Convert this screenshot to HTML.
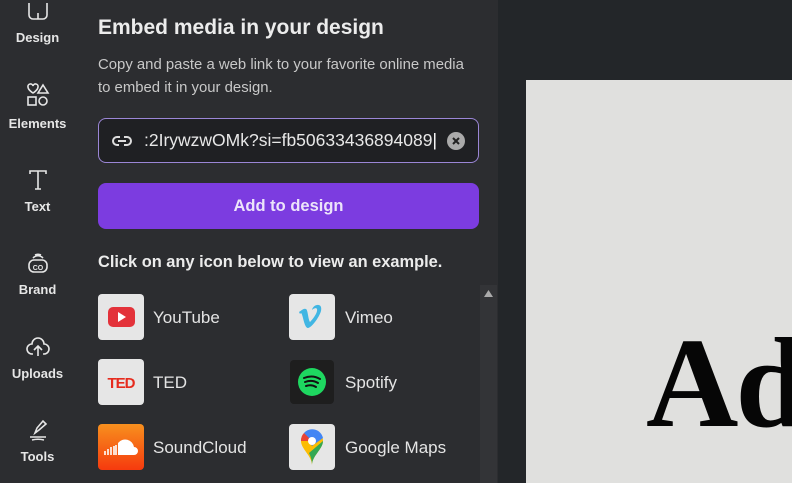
<!DOCTYPE html>
<html><head><meta charset="utf-8"><style>
*{margin:0;padding:0;box-sizing:border-box}
body{width:792px;height:483px;overflow:hidden;background:#232629;font-family:"Liberation Sans",sans-serif;position:relative}
.side{position:absolute;left:0;top:0;width:75px;height:483px;background:#2c2d30}
.nav{position:absolute;left:0;width:75px;text-align:center;color:#e6e6e6;font-size:13px;font-weight:bold}
.nav svg{display:block;margin:0 auto 7px}
.panel{position:absolute;left:75px;top:0;width:423px;height:483px;background:#2c2d30}
.track{position:absolute;left:480px;top:285px;width:17px;height:198px;background:#333437}
h1{position:absolute;left:98px;top:16px;color:#ececec;font-size:21px;font-weight:bold}
.desc{position:absolute;left:98px;top:54px;color:#c8c8c8;font-size:14.9px;line-height:23px}
.input{position:absolute;left:98px;top:118px;width:381px;height:45px;border:1.5px solid #9b86d6;border-radius:8px;background:#1f2023}
.input .t{position:absolute;left:45px;top:11px;color:#e8e8e8;font-size:17.5px}
.btn{position:absolute;left:98px;top:183px;width:381px;height:46px;border-radius:8px;background:#7c3ce0;color:#ece4fa;font-size:16.5px;font-weight:bold;text-align:center;line-height:46px}
.sub{position:absolute;left:98px;top:253px;color:#ececec;font-size:16.4px;font-weight:bold}
.it{position:absolute;width:46px;height:46px;border-radius:4px;background:#e6e6e6;overflow:hidden}
.lb{position:absolute;color:#e4e4e4;font-size:17px}
.page{position:absolute;left:526px;top:80px;width:266px;height:403px;background:#e0e0de}
.ad{position:absolute;left:646px;top:310px;font-family:"Liberation Serif",serif;font-weight:bold;font-size:128px;color:#060606;letter-spacing:-3px}
</style></head><body>
<div class="side"></div>
<div class="nav" style="top:-1px"><svg width="24" height="24" viewBox="0 0 24 24" fill="none" stroke="#e6e6e6" stroke-width="1.6"><path d="M3 4v12a4 4 0 0 0 4 4h10a4 4 0 0 0 4-4V4M12 20v-6"/></svg>Design</div>
<div class="nav" style="top:83px"><svg width="24" height="26" viewBox="0 0 24 26" fill="none" stroke="#e6e6e6" stroke-width="1.6"><path d="M7 10s-5-3-5-6a2.5 2.5 0 0 1 5-1 2.5 2.5 0 0 1 5 1c0 3-5 6-5 6z"/><path d="M17 2l5 8h-10z"/><rect x="2" y="14" width="8" height="8"/><circle cx="17" cy="18" r="4"/></svg>Elements</div>
<div class="nav" style="top:168px"><svg width="24" height="24" viewBox="0 0 24 24" fill="none" stroke="#e6e6e6" stroke-width="1.6"><path d="M4 6V3h16v3M12 3v18M9 21h6"/></svg>Text</div>
<div class="nav" style="top:251px"><svg width="24" height="24" viewBox="0 0 24 24" fill="none" stroke="#e6e6e6" stroke-width="1.6"><rect x="3" y="9" width="18" height="12" rx="5"/><path d="M7 7c3-3 7-3 10 0M9 4c2-1 4-1 6 0"/><text x="12" y="19" font-size="7" fill="#e6e6e6" stroke="none" text-anchor="middle" font-family="Liberation Sans" font-weight="bold">CO</text></svg>Brand</div>
<div class="nav" style="top:335px"><svg width="26" height="24" viewBox="0 0 26 24" fill="none" stroke="#e6e6e6" stroke-width="1.6"><path d="M8 19H7a5 5 0 0 1 0-10 6 6 0 0 1 12 0 5 5 0 0 1 0 10h-1"/><path d="M13 21v-9M9 15l4-4 4 4"/></svg>Uploads</div>
<div class="nav" style="top:418px"><svg width="24" height="24" viewBox="0 0 24 24" fill="none" stroke="#e6e6e6" stroke-width="1.6"><path d="M9 15l2-5 6-7 3 3-7 6zM4 19h16M6 22c4-1 8-1 12 0"/></svg>Tools</div>
<div class="panel"></div>
<div class="track"></div>
<svg style="position:absolute;left:483px;top:289px" width="11" height="9"><path d="M5.5 1L10 8H1z" fill="#aaa"/></svg>
<h1>Embed media in your design</h1>
<div class="desc">Copy and paste a web link to your favorite online media<br>to embed it in your design.</div>
<div class="input">
<svg style="position:absolute;left:11px;top:11px" width="24" height="22" viewBox="0 0 24 22" fill="none" stroke="#ddd" stroke-width="2"><path d="M10 7H7a4 4 0 0 0 0 8h2M14 7h3a4 4 0 0 1 0 8h-3M8 11h8" /></svg>
<div class="t">:2IrywzwOMk?si=fb50633436894089<span style="color:#fff">|</span></div>
<svg style="position:absolute;left:347px;top:12px" width="20" height="20"><circle cx="10" cy="10" r="9" fill="#aaa"/><path d="M7 7l6 6M13 7l-6 6" stroke="#222" stroke-width="2"/></svg>
</div>
<div class="btn">Add to design</div>
<div class="sub">Click on any icon below to view an example.</div>
<div class="it" style="left:98px;top:294px"><svg width="46" height="46"><rect x="10" y="13" width="27" height="20" rx="5" fill="#e3323a"/><path d="M20 18l8 5-8 5z" fill="#fff"/></svg></div>
<div class="lb" style="left:153px;top:308px">YouTube</div>
<div class="it" style="left:289px;top:294px"><svg width="46" height="46"><path d="M10 18c3-2 5-4 7-3 2 1 2 10 4 13 2-2 8-9 7-13-1-2-4 0-5 1 1-6 11-8 9 1-2 7-10 17-13 17-4 0-5-14-7-15l-1 1z" fill="#41b6e3"/></svg></div>
<div class="lb" style="left:345px;top:308px">Vimeo</div>
<div class="it" style="left:98px;top:359px"><svg width="46" height="46"><text x="23" y="29" font-family="Liberation Sans" font-weight="bold" font-size="15" fill="#e62b1e" text-anchor="middle" letter-spacing="-1">TED</text></svg></div>
<div class="lb" style="left:153px;top:373px">TED</div>
<div class="it" style="left:290px;top:360px;background:#1e1e1e;width:44px;height:44px"><svg width="44" height="44"><circle cx="22" cy="22" r="14" fill="#1ed760"/><path d="M14 18c5-2 11-2 16 1M15 22c4-1.5 9-1.5 13 1M16 26c3-1 7-1 10 1" stroke="#111" stroke-width="2" fill="none" stroke-linecap="round"/></svg></div>
<div class="lb" style="left:345px;top:373px">Spotify</div>
<div class="it" style="left:98px;top:424px;background:linear-gradient(#f7901e,#f63a0e)"><svg width="46" height="46"><path d="M20 31V19a9 9 0 0 1 16 4 4 4 0 0 1 0 8z" fill="#fff"/><path d="M7 27v4M10 25v6M13 23v8M16 22v9M18 21v10" stroke="#fff" stroke-width="1.6"/></svg></div>
<div class="lb" style="left:153px;top:438px">SoundCloud</div>
<div class="it" style="left:289px;top:424px"><svg width="46" height="46"><path d="M23 6a11 11 0 0 0-11 11c0 8 11 15 11 24 0-9 11-16 11-24A11 11 0 0 0 23 6z" fill="#fbbc04"/><path d="M15 9a11 11 0 0 1 19 5l-11 8z" fill="#4285f4"/><path d="M12 17a11 11 0 0 1 3-8l8 8z" fill="#ea4335"/><path d="M23 41c0-9 11-16 11-24l-14 12c2 4 3 8 3 12z" fill="#34a853"/><circle cx="23" cy="17" r="4" fill="#fff"/></svg></div>
<div class="lb" style="left:345px;top:438px">Google Maps</div>
<div class="page"></div>
<div class="ad">Ad</div>
</body></html>
